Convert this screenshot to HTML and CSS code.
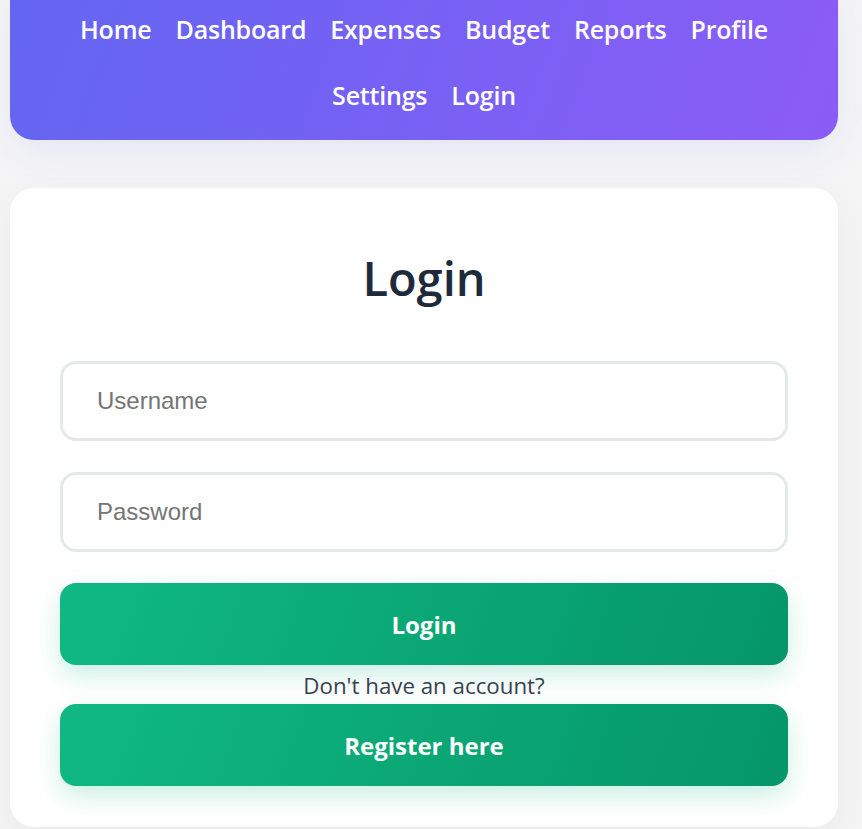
FILE: index.html
```html
<!DOCTYPE html>
<html lang="en">
<head>
<meta charset="utf-8">
<title>Login</title>
<link rel="stylesheet" href="styles.css">
</head>
<body>
<nav class="nav">
  <a class="nav-link" href="#">Home</a>
  <a class="nav-link" href="#">Dashboard</a>
  <a class="nav-link" href="#">Expenses</a>
  <a class="nav-link" href="#">Budget</a>
  <a class="nav-link" href="#">Reports</a>
  <a class="nav-link" href="#">Profile</a>
  <a class="nav-link" href="#">Settings</a>
  <a class="nav-link" href="#">Login</a>
</nav>
<main class="card">
  <h1 class="title">Login</h1>
  <form class="form">
    <input class="field" type="text" placeholder="Username">
    <input class="field" type="password" placeholder="Password">
    <button class="btn" type="button">Login</button>
    <p class="hint">Don't have an account?</p>
    <button class="btn" type="button">Register here</button>
  </form>
</main>
</body>
</html>
```
FILE: styles.css
```css
* { box-sizing: border-box; }
html, body { margin: 0; padding: 0; }
body {
  background: #f5f5f6;
  font-family: "Open Sans", "Noto Sans", sans-serif;
  width: 862px;
  height: 829px;
  overflow: hidden;
}
.nav {
  margin: -14px 24px 0 10px;
  padding: 10px 40px 12px;
  background: linear-gradient(110deg, #6366f1 0%, #8b5cf6 100%);
  border-radius: 0 0 24px 24px;
  box-shadow: 0 12px 40px rgba(99, 102, 241, 0.1);
  display: flex;
  flex-wrap: wrap;
  justify-content: center;
}
.nav-link {
  display: block;
  color: #fff;
  text-decoration: none;
  font-size: 25px;
  font-weight: 600;
  line-height: 30px;
  padding: 18px 12px;
  letter-spacing: -0.2px;
}
.card {
  margin: 48px 24px 0 10px;
  background: #fff;
  border-radius: 24px;
  padding: 62px 50px 41px;
  box-shadow: 0 10px 40px rgba(0, 0, 0, 0.05);
}
.title {
  margin: 0 0 55px;
  text-align: center;
  font-size: 47px;
  line-height: 56px;
  font-weight: 600;
  color: #1e293b;
}
.form {
  display: flex;
  flex-direction: column;
}
.field {
  height: 80px;
  border: 3px solid #e5e7eb;
  border-radius: 16px;
  padding: 0 34px;
  font-family: "Liberation Sans", Arial, sans-serif;
  font-size: 24px;
  color: #111;
  margin-bottom: 31px;
  outline: none;
  background: #fff;
}
.field::placeholder { color: #757575; }
.btn {
  height: 82px;
  border: none;
  border-radius: 16px;
  background: linear-gradient(110deg, #10b981 0%, #059669 100%);
  color: #fff;
  font-family: "Open Sans", "Noto Sans", sans-serif;
  font-size: 24px;
  font-weight: 700;
  box-shadow: 0 10px 25px rgba(16, 185, 129, 0.22);
}
.hint {
  margin: 0;
  height: 39px;
  line-height: 42px;
  text-align: center;
  font-size: 22.3px;
  color: #374151;
}
```
